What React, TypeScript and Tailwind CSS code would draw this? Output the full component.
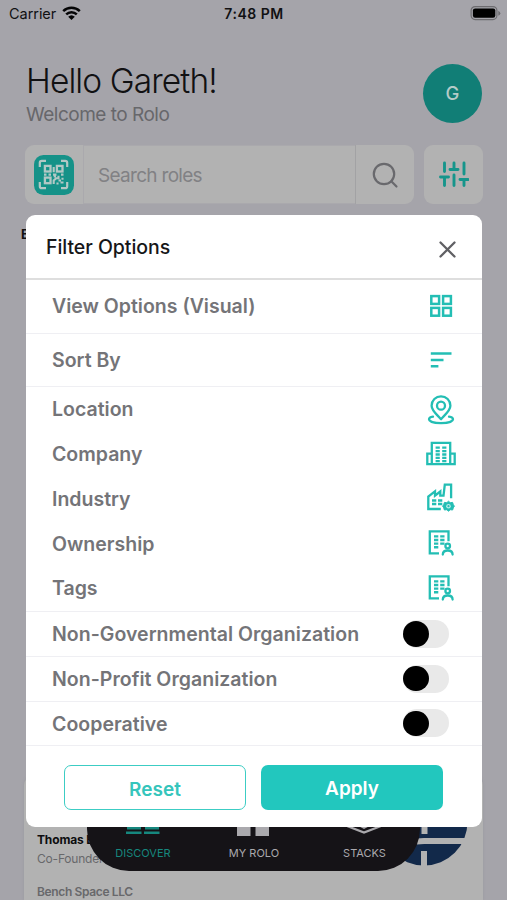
import React from "react";

const stroke = {
  fill: "none",
  stroke: "currentColor",
  strokeLinecap: "round" as const,
  strokeLinejoin: "round" as const,
};

function WifiIcon() {
  return (
    <svg width="19" height="15" viewBox="0 0 19 15" fill="none" stroke="#050506" strokeWidth="2.500" className="-mt-0.5">
      <path d="M1.200 5.100a12 12 0 0 1 16.600 0" />
      <path d="M4.200 8.300a7.600 7.600 0 0 1 10.600 0" />
      <path d="M9.500 14 6.200 10.700a4.800 4.800 0 0 1 6.600 0z" fill="#050506" stroke="none" />
    </svg>
  );
}

function BatteryIcon() {
  return (
    <svg width="31" height="16" viewBox="0 0 31 16" className="-mt-0.5">
      <rect x="1.100" y="1.600" width="25.800" height="13" rx="4" fill="none" stroke="#6d6c70" strokeWidth="1.200" />
      <rect x="2.900" y="3.400" width="22.400" height="9.400" rx="2.200" fill="#000" />
      <path d="M28.300 5.700q2 1 2 2.500t-2 2.500z" fill="#6d6c70" />
    </svg>
  );
}

function ScanIcon() {
  return (
    <svg width="40" height="40" viewBox="0 0 40 40" fill="none" stroke="#b3c8c5">
      <rect width="40" height="40" rx="9.500" fill="#159288" stroke="none" />
      <path
        d="M5.800 12V7.800q0-2 2-2H12M27 5.800h4.200q2 0 2 2V12M33.200 27v4.200q0 2-2 2H27M12 33.200H7.800q-2 0-2-2V27"
        strokeWidth="2.200"
      />
      <g strokeWidth="2.300">
        <rect x="10.900" y="10.900" width="5.600" height="5.600" />
        <rect x="22.900" y="10.900" width="5.600" height="5.600" />
        <rect x="10.900" y="22.600" width="5.600" height="5.600" />
      </g>
      <path
        d="M19.700 12v5.200M10 19.600h2.500m2 0h2.500m2 0h3.500m4.500 0h2.500M19.700 21.500h2.300m-2.300 7.500v-3.500l2.500-2.300h2.300v-2.500M24.500 25.500h2.500m1.500-2.800v2m-5 2.800v2m3-2h3"
        strokeWidth="2.100"
      />
    </svg>
  );
}

function SlidersIcon() {
  return (
    <svg width="30" height="26" viewBox="0 0 30 26" className="-mt-0.5 text-[#15958b]" {...stroke} strokeWidth="2.900">
      <path d="M5.500 2v8.500M1.500 16h8M5.500 16v8.500M15 2v6M11 8.500h8M15 14v10.500M25 2v11M21 18.500h8M25 18.500v6" />
    </svg>
  );
}

function GridIcon() {
  return (
    <svg width="30" height="30" viewBox="0 0 30 30" className="-mt-px" fill="none" stroke="currentColor" strokeWidth="2.500">
      <rect x="5.300" y="5.100" width="7.800" height="7.800" />
      <rect x="17.100" y="5.100" width="7.800" height="7.800" />
      <rect x="5.300" y="16.900" width="7.800" height="7.800" />
      <rect x="17.100" y="16.900" width="7.800" height="7.800" />
    </svg>
  );
}

function SortIcon() {
  return (
    <svg width="30" height="30" viewBox="0 0 30 30" fill="none" stroke="currentColor" strokeWidth="2.500">
      <path d="M4.800 8.600h20.700M4.800 15h12.700M4.800 21.300h7.600" />
    </svg>
  );
}

function LocationIcon() {
  return (
    <svg width="30" height="30" viewBox="0 0 30 30" className="mt-px" {...stroke} strokeWidth="2.300">
      <path d="M15 24.200C12 20.500 5.600 15.800 5.600 10.700a9.400 9.400 0 0 1 18.800 0c0 5.100-6.400 9.800-9.400 13.500z" />
      <circle cx="15" cy="10.700" r="4" />
      <path d="M7 21.600c-2.300.3-4 1.400-4 2.700 0 2.200 5.300 3.800 12 3.800s12-1.600 12-3.800c0-1.300-1.700-2.400-4-2.700" />
    </svg>
  );
}

function CompanyIcon() {
  return (
    <svg width="30" height="30" viewBox="0 0 30 30" className="-mt-px" fill="none" stroke="currentColor" strokeWidth="2.300">
      <path d="M5.800 25.200V3.900h18.400v21.300M5.800 14.600H1.300v10.600h27.400V14.600h-4.500" />
      <path d="M9.600 8.700h4.200M16.200 8.700h4.200M9.600 12.100h4.200M16.200 12.100h4.200M9.600 15.500h4.200M16.200 15.500h4.200M9.600 18.900h4.200M16.200 18.900h4.200M9.600 22.100h4.200M16.200 22.100h4.200" />
    </svg>
  );
}

function IndustryIcon() {
  return (
    <svg width="30" height="30" viewBox="0 0 30 30" className="-mt-px" fill="none" stroke="currentColor" strokeWidth="2.300">
      <path d="M14.800 26H2.300V13.500L9 8.300v4.400l5.300-4.200v4.200h3.200L18.800 1.700h6.300v13.600" />
      <path d="M6 17.400h4.300M12 17.400h4.300M6 21h4.300M12 21h4.300" strokeWidth="2.500" />
      <path
        d="m22.500 18.200 1.700 1.500 2.400-.3.700 2.200 1.100 1.600-1.100 1.600-.7 2.200-2.400-.3-1.700 1.500-1.700-1.500-2.400.3-.7-2.200-1.100-1.600 1.100-1.600.7-2.200 2.400.3z"
        fill="currentColor"
        strokeWidth="1"
      />
      <circle cx="22.500" cy="23.200" r="2.300" fill="#b9ece8" stroke="none" />
      <circle cx="22.500" cy="23.200" r="1.100" fill="currentColor" stroke="none" />
    </svg>
  );
}

function OwnerIcon() {
  return (
    <svg width="30" height="30" viewBox="0 0 30 30" className="-mt-px" fill="none" stroke="currentColor" strokeWidth="2.300">
      <path d="M13 25.400H3.800V3.300h18.700v10" />
      <path d="M8 8.400h4.300M14.200 8.400h4.300M8 12h4.300M14.200 12h4.300M8 15.600h4.300M14.200 15.600h4.300M8 19.200h4.300" strokeWidth="2.400" />
      <circle cx="21.700" cy="18" r="2.300" />
      <path d="M16.800 26.600c0-2.800 1.800-4.100 4.900-4.100s4.900 1.300 4.900 4.100" strokeLinecap="round" />
    </svg>
  );
}

function Switch() {
  return (
    <span className="ml-auto mr-[33px] flex h-7 w-[46px] items-center rounded-full bg-[#e9e9e9]">
      <span className="size-[25.500px] rounded-full bg-black" />
    </span>
  );
}

const tools = [
  { label: "Location", icon: <LocationIcon /> },
  { label: "Company", icon: <CompanyIcon /> },
  { label: "Industry", icon: <IndustryIcon /> },
  { label: "Ownership", icon: <OwnerIcon /> },
  { label: "Tags", icon: <OwnerIcon /> },
];

const flags = ["Non-Governmental Organization", "Non-Profit Organization", "Cooperative"];

function FilterDialog() {
  return (
    <section className="absolute left-[26px] top-[215px] flex h-[612px] w-[456px] flex-col overflow-hidden rounded-[9px] bg-white text-[19.500px] font-semibold text-[#747478]">
      <header className="flex h-[65px] shrink-0 items-center justify-between border-b-2 border-[#dedede] pl-5 pr-[26px]">
        <h2 className="pt-0.5 text-[19.500px] font-medium tracking-[-0.050px] text-[#161618]">Filter Options</h2>
        <svg width="17" height="17" viewBox="0 0 17 17" className="mt-[5px] text-[#606064]" {...stroke} strokeWidth="2.300">
          <path d="m1.500 1.500 14 14m0-14-14 14" />
        </svg>
      </header>
      <div className="flex h-[54px] shrink-0 items-center justify-between border-b border-[#efeff3] px-[26px]">
        <span>View Options (Visual)</span>
        <span className="text-[#23beb4]"><GridIcon /></span>
      </div>
      <div className="flex h-[53px] shrink-0 items-center justify-between border-b border-[#efeff3] px-[26px]">
        <span className="pt-0.5">Sort By</span>
        <span className="text-[#23beb4]"><SortIcon /></span>
      </div>
      <div className="flex h-[225px] shrink-0 flex-col border-b border-[#efeff3]">
        {tools.map((t) => (
          <div key={t.label} className="flex h-[44.800px] items-center justify-between px-[26px]">
            <span className="pt-px">{t.label}</span>
            <span className="text-[#23beb4]">{t.icon}</span>
          </div>
        ))}
      </div>
      {flags.map((f) => (
        <div key={f} className="flex h-[44.800px] shrink-0 items-center border-b border-[#efeff3] pl-[26px]">
          <span className="pt-0.5 tracking-[0.030px]">{f}</span>
          <Switch />
        </div>
      ))}
      <div className="mt-[18.600px] flex gap-[15px] pl-[38px] text-[19px]">
        <button className="h-[45px] w-[182px] rounded-[7px] border-[1.500px] border-[#3ccdc4] pt-1.5 text-[#35c5bc]">Reset</button>
        <button className="h-[45px] w-[182px] rounded-[7px] bg-[#22c7be] pt-[3px] text-white">Apply</button>
      </div>
    </section>
  );
}

function BottomNav() {
  return (
    <nav className="absolute left-[87px] top-[760px] flex h-[110.500px] w-[333px] items-end rounded-[42px] bg-[#151317] pb-2.5 text-[11px] text-[#aaa9ad]">
      <div className="flex w-[112px] flex-col items-center gap-[10.500px] text-[#16877e]">
        <svg width="34" height="24" viewBox="0 0 34 24" fill="currentColor">
          <path d="M1 0h14v19.500H1zM19 0h14v19.500H19zM0 21.500h15.500V24H0zM18 21.500h15.500V24H18z" />
        </svg>
        <span className="leading-4">DISCOVER</span>
      </div>
      <div className="flex w-[110px] flex-col items-center gap-[8.500px]">
        <svg width="34" height="24" viewBox="0 0 34 24" fill="currentColor">
          <path d="M0 0h13.500v24H0zM18.500 0H32v24H18.500z" />
        </svg>
        <span className="leading-4">MY ROLO</span>
      </div>
      <div className="flex w-[111px] flex-col items-center gap-[11px]">
        <svg width="36" height="24" viewBox="0 0 36 24" fill="none" stroke="currentColor" strokeWidth="2.400" className="-translate-x-px">
          <path d="m1 16 17 6.500L35 16" />
          <path d="m4 11.500 14 7.500 14-7.500z" fill="currentColor" stroke="none" />
        </svg>
        <span className="leading-4">STACKS</span>
      </div>
    </nav>
  );
}

export default function App() {
  return (
    <main className="relative flex h-[900px] w-[507px] flex-col overflow-hidden bg-[#a5a4aa] font-['Inter','Liberation_Sans',sans-serif]">
      <div className="grid h-7 shrink-0 grid-cols-3 items-center pl-[9px] pr-[6px] text-[14.500px] text-[#111113]">
        <div className="flex items-center gap-[6px]">
          <span className="tracking-[-0.050px]">Carrier</span>
          <WifiIcon />
        </div>
        <span className="-translate-x-px -translate-y-px text-center text-[14px] font-semibold tracking-[0.500px]">7:48 PM</span>
        <span className="justify-self-end"><BatteryIcon /></span>
      </div>
      <header className="flex h-[117px] shrink-0 justify-between pl-[26px] pr-[25px] pt-9">
        <div>
          <h1 className="text-[33.500px] font-[350] leading-[35px] tracking-[-0.900px] text-[#111113]">Hello Gareth!</h1>
          <p className="text-[19px] leading-[32px] tracking-[-0.500px] text-[#67676b]">Welcome to Rolo</p>
        </div>
        <div className="flex size-[59px] items-center justify-center rounded-full bg-[#117e76] text-[18.500px] font-medium text-[#b4cbc8]">G</div>
      </header>
      <div className="flex h-[59px] shrink-0 gap-[10px] pl-[25px] pr-6">
        <div className="flex w-[389px] overflow-hidden rounded-[9px] bg-[#b2b2b2]">
          <div className="flex w-[59px] items-center justify-center border-r border-[#aaa9ad]"><ScanIcon /></div>
          <div className="flex flex-1 items-center border-y border-[#aaa9ad] pl-[14px] pt-[3px] text-[19px] tracking-[-0.700px] text-[#818184]">Search roles</div>
          <div className="flex w-[59px] items-center justify-center border-l border-[#a2a2a4] text-[#69696d]">
            <svg width="27" height="27" viewBox="0 0 27 27" className="mt-px" {...stroke} strokeWidth="2.200">
              <circle cx="12" cy="12" r="10.200" />
              <path d="m19.300 19.300 5.200 5.200" />
            </svg>
          </div>
        </div>
        <div className="flex w-[59px] items-center justify-center rounded-[9px] bg-[#b2b2b2]"><SlidersIcon /></div>
      </div>
      <h3 className="pl-[21px] pt-[21px] text-[13px] font-bold leading-[18px] text-[#111113]">E</h3>
      <article className="mx-6 mt-auto flex h-[123px] justify-between rounded-t-lg bg-[#b2b2b2] pl-[13px] pr-[15px] shadow-[0_0_3px_#99989e]">
        <div className="pt-[53px] text-[12px]">
          <p className="font-bold leading-[19px] tracking-[-0.150px] text-[#0d0d0f]">Thomas B</p>
          <p className="leading-[20px] tracking-[-0.200px] text-[#68686b]">Co-Founder</p>
          <p className="pt-[14px] font-semibold leading-[18px] tracking-[-0.360px] text-[#68686b]">Bench Space LLC</p>
        </div>
        <svg className="mt-[1px]" width="88" height="88" viewBox="0 0 88 88">
          <circle cx="44" cy="44" r="43.500" fill="#12294a" />
          <path d="M0 66 44 63h44M44.500 0v56M44 73v15" stroke="#b2b2b2" strokeWidth="6" fill="none" />
        </svg>
      </article>
      <BottomNav />
      <FilterDialog />
    </main>
  );
}
